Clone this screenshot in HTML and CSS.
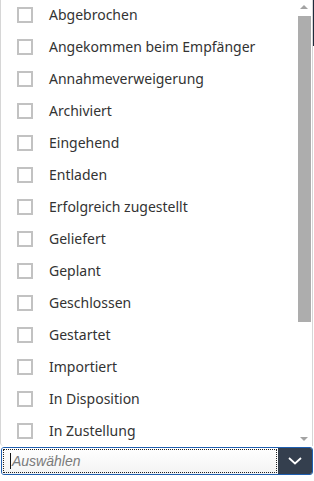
FILE: index.html
```html
<!DOCTYPE html>
<html lang="de">
<head>
  <meta charset="UTF-8">
  <meta name="viewport" content="width=device-width, initial-scale=1.0">
  <title>Status auswählen</title>
  <link rel="stylesheet" href="styles.css">
</head>
<body>
  <div class="page">
    <div class="page-header"></div>

    <div class="dropdown">
      <div class="dropdown-panel">
        <ul class="option-list">
          <li class="option"><span class="check"></span>Abgebrochen</li>
          <li class="option"><span class="check"></span>Angekommen beim Empfänger</li>
          <li class="option"><span class="check"></span>Annahmeverweigerung</li>
          <li class="option"><span class="check"></span>Archiviert</li>
          <li class="option"><span class="check"></span>Eingehend</li>
          <li class="option"><span class="check"></span>Entladen</li>
          <li class="option"><span class="check"></span>Erfolgreich zugestellt</li>
          <li class="option"><span class="check"></span>Geliefert</li>
          <li class="option"><span class="check"></span>Geplant</li>
          <li class="option"><span class="check"></span>Geschlossen</li>
          <li class="option"><span class="check"></span>Gestartet</li>
          <li class="option"><span class="check"></span>Importiert</li>
          <li class="option"><span class="check"></span>In Disposition</li>
          <li class="option"><span class="check"></span>In Zustellung</li>
        </ul>
        <div class="scrollbar">
          <span class="scroll-arrow up"></span>
          <span class="scroll-thumb"></span>
          <span class="scroll-arrow down"></span>
        </div>
      </div>

      <div class="combo">
        <div class="combo-input"><span class="caret"></span><span class="placeholder">Auswählen</span></div>
        <button class="combo-button" type="button">
          <svg width="14" height="8" viewBox="0 0 14 8"><path d="M1 1 L7 6.5 L13 1" fill="none" stroke="#fff" stroke-width="1.8"/></svg>
        </button>
      </div>
    </div>
  </div>
</body>
</html>
```

FILE: styles.css
```css
body {
  margin: 0;
  background: #fff;
  font-family: "Noto Sans", "Open Sans", sans-serif;
}
.page {
  position: relative;
  width: 314px;
  height: 481px;
  overflow: hidden;
}
.page-header {
  height: 46px;
  background: #1f2b3b;
}
.dropdown {
  position: absolute;
  top: 0;
  left: 0;
  width: 313px;
}
.dropdown-panel {
  display: flex;
  height: 446px;
  background: #fff;
  border-left: 1px solid #d6d6d6;
  border-right: 1px solid #d6d6d6;
  border-bottom-left-radius: 4px;
  overflow: hidden;
  box-sizing: border-box;
}
.option-list {
  flex: 1;
  list-style: none;
  margin: -2px 0 0;
  padding: 0;
}
.option {
  display: flex;
  align-items: center;
  height: 32px;
  padding-left: 16px;
  font-size: 14px;
  color: #333;
  white-space: nowrap;
}
.check {
  width: 12px;
  height: 12px;
  border: 2px solid #c2c2c2;
  margin-top: 1px;
  margin-right: 16px;
  flex-shrink: 0;
}
.scrollbar {
  display: flex;
  flex-direction: column;
  align-items: center;
  width: 14px;
  margin-right: 1px;
}
.scroll-arrow {
  width: 0;
  height: 0;
  border-left: 4px solid transparent;
  border-right: 4px solid transparent;
}
.scroll-arrow.up {
  margin-top: 5px;
  border-bottom: 4px solid #a3a3a3;
}
.scroll-thumb {
  width: 13px;
  height: 306px;
  margin-top: 7px;
  background: #adadad;
}
.scroll-arrow.down {
  margin-top: auto;
  margin-bottom: 5px;
  border-top: 4px solid #a3a3a3;
}
.combo {
  display: flex;
  height: 28px;
  margin-top: 1px;
  margin-left: 1px;
  border: 1px solid #1f5fb0;
  border-radius: 3px;
  overflow: hidden;
  box-sizing: border-box;
}
.combo-input {
  flex: 1;
  display: flex;
  align-items: center;
  padding-left: 8px;
  outline: 1px dotted #222;
  outline-offset: -2px;
  background: linear-gradient(#fff, #f3f3f3);
}
.caret {
  width: 1px;
  height: 16px;
  margin-right: 1px;
  background: #111;
}
.placeholder {
  font-family: "Liberation Sans", Arial, sans-serif;
  font-style: italic;
  font-size: 14px;
  line-height: 18px;
  color: #7a7a7a;
}
.combo-button {
  width: 34px;
  border: none;
  background: #343f4e;
  display: flex;
  align-items: center;
  justify-content: center;
  padding: 0;
}
```
